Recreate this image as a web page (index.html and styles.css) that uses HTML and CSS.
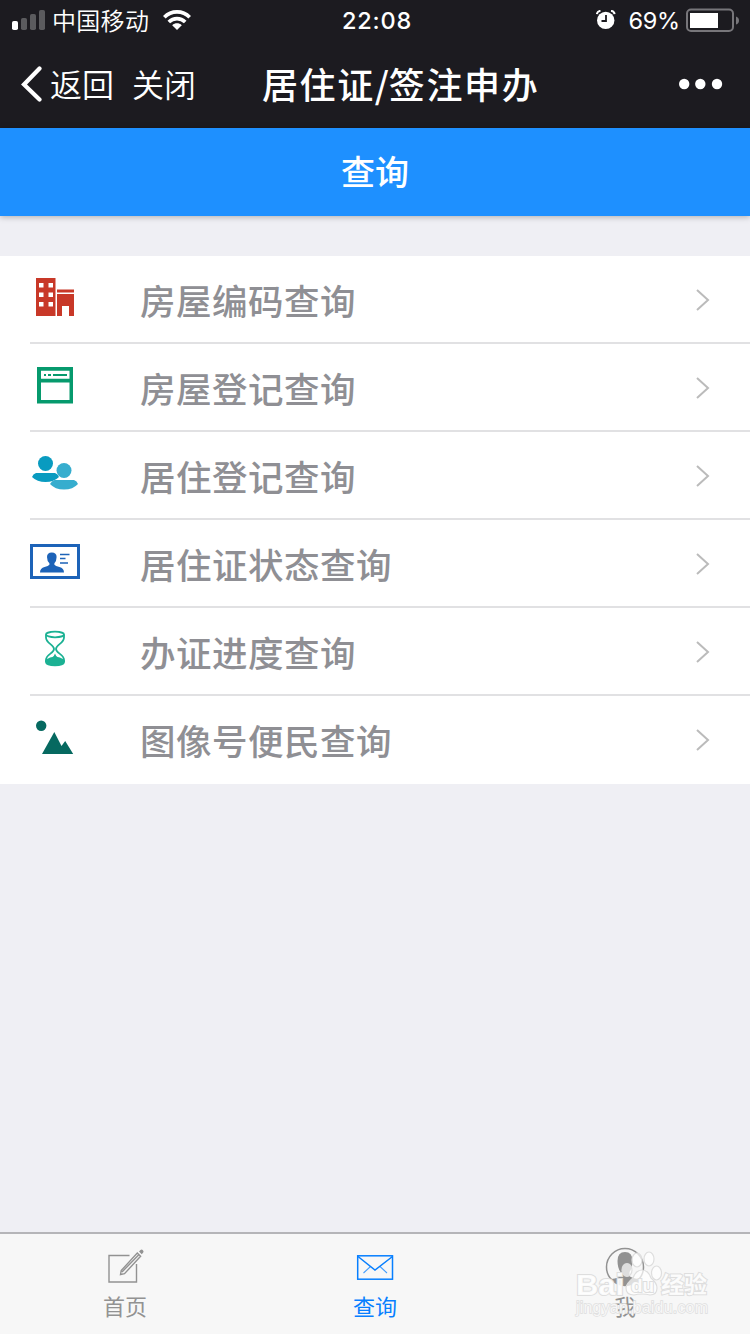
FILE: index.html
```html
<!DOCTYPE html>
<html lang="zh-CN">
<head>
<meta charset="utf-8">
<title>居住证/签注申办</title>
<link rel="stylesheet" href="styles.css">
</head>
<body>
<div class="app">
  <header class="top">
    <div class="status">
      <div class="status-left">
        <svg class="signal" width="34" height="20" viewBox="0 0 34 20"><g fill="#fff"><rect x="0" y="11" width="6" height="9" rx="1.8"/><g opacity=".28"><rect x="9" y="8" width="6" height="12" rx="1.8"/><rect x="18" y="4" width="6" height="16" rx="1.8"/><rect x="27" y="0" width="6" height="20" rx="1.8"/></g></g></svg>
        <span class="carrier">中国移动</span>
        <svg class="wifi" width="28" height="20" viewBox="0 0 28 20"><g fill="none" stroke="#fff" stroke-width="3.7"><path d="M1.3 7.2C8.3.1 19.7.1 26.7 7.2"/><path d="M5.8 12c4.6-4.500 11.800-4.500 16.400 0"/></g><path fill="#fff" d="M9.200 15.200c2.800-2.500 6.800-2.500 9.600 0L14 20z"/></svg>
      </div>
      <span class="time">22:08</span>
      <div class="status-right">
        <svg width="20" height="20" viewBox="0 0 20 20"><circle cx="9.700" cy="10.400" r="8.700" fill="#fff"/><path d="M.8 4.200Q1.200 1.200 4.500.8M15 .8q3.200.4 3.600 3.400" stroke="#fff" stroke-width="2" fill="none"/><path d="M10 5v6H5.500" fill="none" stroke="#1c1b20" stroke-width="1.800"/></svg>
        <span class="percent">69%</span>
        <svg class="battery" width="54" height="24" viewBox="0 0 54 24"><rect x="1" y="1.500" width="46" height="21.500" rx="4" fill="none" stroke="#77767a" stroke-width="2"/><rect x="4" y="5" width="28" height="15" fill="#fff"/><path d="M50 8.500q3 1 3 4t-3 4z" fill="#77767a"/></svg>
      </div>
    </div>
    <nav class="nav">
      <div class="nav-left">
        <svg width="22" height="38" viewBox="0 0 22 38"><path d="M19.500 3.500 4 19.500l15.500 15" fill="none" stroke="#fff" stroke-width="4.200" stroke-linecap="round"/></svg>
        <span class="back">返回</span><span class="close">关闭</span>
      </div>
      <h1 class="title">居住证<span class="slash">/</span>签注申办</h1>
      <svg class="more" width="44" height="12" viewBox="0 0 44 12" fill="#fff"><circle cx="5.200" cy="6" r="5.200"/><circle cx="21.300" cy="6" r="5.200"/><circle cx="38" cy="6" r="5.200"/></svg>
    </nav>
  </header>
  <div class="banner">查询</div>
  <main class="content">
    <ul class="list">
      <li class="row"><svg class="icon" width="50" height="50" viewBox="0 0 50 50"><path fill="#c83828" fill-rule="evenodd" d="M6 4h19.500v38H6zM9 9h4.500v4.500H9zm9.500 0H23v4.500h-4.500zM9 18.500h4.500V23H9zm9.500 0H23V23h-4.500zM9 28h4.500v4.500H9zm9.500 0H23v4.500h-4.500zM27 15.500h17v3H27zM27 20h17v22h-5V32h-7v10h-5z"/></svg><div class="cell"><span>房屋编码查询</span><svg class="arrow" width="15" height="24" viewBox="0 0 15 24"><path d="m2 2 11 10L2 22"/></svg></div></li>
      <li class="row"><svg class="icon" width="50" height="50" viewBox="0 0 50 50"><path fill="#069a6d" fill-rule="evenodd" d="M7 5h36v36.500H7zM11 8.700v8h28.500v-8zM11 20.500V38h28.500V20.500z"/><path d="M14 13h2m2 0h3m2 0h14" stroke="#069a6d" stroke-width="2"/></svg><div class="cell"><span>房屋登记查询</span><svg class="arrow" width="15" height="24" viewBox="0 0 15 24"><path d="m2 2 11 10L2 22"/></svg></div></li>
      <li class="row"><svg class="icon" width="50" height="50" viewBox="0 0 50 50"><g fill="#099bc0"><ellipse cx="15.500" cy="13.500" rx="7.500" ry="7.500"/><path d="M6 23h19q3 1 4 4-5 5-13.500 5T2 27q1-3 4-4z"/></g><g fill="#36adce"><ellipse cx="34" cy="20.500" rx="7.500" ry="7.500"/><path d="M24.500 30H44q3 1 4 4-5 5.500-14 5.500T20 34q1.500-3 4.500-4z"/></g></svg><div class="cell"><span>居住登记查询</span><svg class="arrow" width="15" height="24" viewBox="0 0 15 24"><path d="m2 2 11 10L2 22"/></svg></div></li>
      <li class="row"><svg class="icon" width="50" height="50" viewBox="0 0 50 50"><rect x="1.500" y="7.500" width="47" height="32" fill="none" stroke="#1d63b8" stroke-width="3"/><path fill="#1d63b8" d="M17 19q0-4.500 4.800-4.500t4.800 4.500q0 4-2.200 6.200v1.600q1 1.200 5 2.200 4.600 1.100 4.600 5.500H10q0-4.400 4.600-5.500 3.800-1 4.800-2.200v-1.600Q17 23 17 19z"/><path d="M30 16.500h9.500M30 20.500h5.500M30 25h8" stroke="#1d63b8" stroke-width="1.700"/></svg><div class="cell"><span>居住证状态查询</span><svg class="arrow" width="15" height="24" viewBox="0 0 15 24"><path d="m2 2 11 10L2 22"/></svg></div></li>
      <li class="row"><svg class="icon" width="50" height="50" viewBox="0 0 50 50"><g fill="none" stroke="#1bb193" stroke-width="1.800"><ellipse cx="25" cy="8.500" rx="9" ry="2.800"/><path d="M16 8.500v3c0 6 8 7 8 11.500s-8 5-8 11v2M34 8.500v3c0 6-8 7-8 11.500s8 5 8 11v2"/></g><path fill="#1bb193" d="M15.200 34.500q2-2.500 7.300-3.500 1.600-.8 2.500-3.500.9 2.700 2.500 3.500 5.300 1 7.300 3.500v2.300Q34 40.200 25 40.200t-9.800-3.400z"/></svg><div class="cell"><span>办证进度查询</span><svg class="arrow" width="15" height="24" viewBox="0 0 15 24"><path d="m2 2 11 10L2 22"/></svg></div></li>
      <li class="row"><svg class="icon" width="50" height="50" viewBox="0 0 50 50" fill="#066960"><circle cx="11.200" cy="11.800" r="5.200"/><path d="m12 40 12.300-22 7.200 14 3.700-5 8 13z"/></svg><div class="cell"><span>图像号便民查询</span><svg class="arrow" width="15" height="24" viewBox="0 0 15 24"><path d="m2 2 11 10L2 22"/></svg></div></li>
    </ul>
  </main>
  <footer class="tabs">
    <div class="tab"><svg width="40" height="40" viewBox="0 0 40 40"><g fill="none" stroke="#929292" stroke-width="1.400"><path d="M24.500 8.500H4v26.500h27.500V17"/><path d="m15.500 27.500.7-4L32.300 6.100l3.300 3.200L19.500 26.700zM17 25 33.800 7.700"/></g><path d="m34 4.500 1.500-1.500q1.200-1 2.400.2 1.300 1.300.2 2.500L36.700 7.300z" fill="#929292"/></svg><span>首页</span></div>
    <div class="tab active"><svg width="40" height="40" viewBox="0 0 40 40" fill="none" stroke="#077fff" stroke-width="1.500"><rect x="2.700" y="8.800" width="34.800" height="23.400"/><path d="m3 9.500 17 13.500 17.500-13.500"/><path d="m15.500 19.500-7 6.500M25 19.500l7 6.500" stroke-width="1.100" opacity=".75"/></svg><span>查询</span></div>
    <div class="tab"><svg width="40" height="40" viewBox="0 0 40 40"><circle cx="20" cy="20" r="18.500" fill="none" stroke="#929292" stroke-width="1.500"/><path fill="#929292" d="M12.500 14q0-9 7.500-9t7.500 9q0 7-3 11v4q2 2 9 3-5 6.500-13.500 6.500T6.500 32q7-1 9-3v-4q-3-4-3-11z"/></svg><span>我</span></div>
    <div class="watermark">
      <svg width="150" height="76" viewBox="0 0 150 76">
        <g fill="#fff" fill-opacity=".7" stroke="#dedede" stroke-width="1.200">
          <ellipse cx="75" cy="18" rx="5" ry="7"/><ellipse cx="87" cy="17" rx="5" ry="7"/><ellipse cx="65" cy="28" rx="5" ry="6.500"/><ellipse cx="94.500" cy="31" rx="5" ry="7"/>
          <path d="M80 28q6 0 9 8 6 5 6 10 0 7-7 7-8-2-16 0-8 0-8-7 0-4 7-10 3-8 9-8z"/>
          <g paint-order="stroke" stroke-width="2" fill-opacity=".9">
          <text class="wm-logo" x="14" y="53" textLength="48" lengthAdjust="spacingAndGlyphs">Bai</text>
          <text class="wm-du" x="69" y="50">du</text>
          <text class="wm-cn" x="99" y="51">经验</text>
          <text class="wm-url" x="14" y="71" textLength="132" stroke-width="1.400" fill-opacity=".75">jingyan.baidu.com</text>
          </g>
        </g>
      </svg>
    </div>
  </footer>
</div>
</body>
</html>
```
FILE: styles.css
```css
* { box-sizing: border-box; }
body { margin: 0; font-family: "Noto Sans CJK SC", sans-serif; background: #efeff4; }
svg { display: block; flex: none; }
.app { width: 750px; height: 1334px; display: flex; flex-direction: column; overflow: hidden; }

.top { height: 128px; flex: none; background: #1c1b20; color: #fff; }
.status { height: 40px; display: grid; grid-template-columns: 1fr auto 1fr; align-items: center; padding: 0 10px 0 12px; }
.status-left, .status-right { display: flex; align-items: center; }
.carrier { margin-left: 6px; font-size: 24px; font-weight: 350; line-height: 40px; letter-spacing: 0.3px; }
.wifi { margin-left: 14px; }
.time { padding: 2px 0 0 2px; font: 500 23.5px/38px Inter, sans-serif; letter-spacing: 0.8px; }
.status-right { justify-content: flex-end; }
.percent { margin: 0 6px 0 12px; padding-top: 2px; font: 23.5px/38px Inter, sans-serif; letter-spacing: -0.2px; }

.nav { height: 88px; display: flex; align-items: center; padding: 0 27px 0 20px; }
.nav-left { width: 242px; flex: none; display: flex; align-items: center; font-size: 32px; font-weight: 350; line-height: 86px; }
.nav-left span { padding-bottom: 2px; }
.back { margin-left: 8px; }
.close { margin-left: 18px; }
.title { margin: 0; padding-bottom: 1px; font-size: 36px; font-weight: 500; line-height: 85px; letter-spacing: 1.6px; white-space: nowrap; }
.slash { letter-spacing: 0; }
.more { margin-left: auto; }

.banner { height: 88px; flex: none; background: #1e90ff; color: #fff; text-align: center; font-size: 34px; font-weight: 500; line-height: 86px; box-shadow: 0 1px 6px rgba(0, 0, 0, 0.28); }

.content { flex: 1; padding-top: 40px; }
.list { margin: 0; padding: 0; list-style: none; background: #fff; }
.row { height: 88px; display: flex; padding-left: 30px; background: linear-gradient(#e1e1e3, #e1e1e3) 30px 100% / 100% 2px no-repeat; }
.row:last-child { background: none; }
.icon { margin-top: 18px; }
.cell { flex: 1; display: flex; justify-content: space-between; align-items: center; padding: 0 40px 0 60px; color: #8f8f94; font-size: 35.5px; font-weight: 500; line-height: 88px; letter-spacing: 0.5px; }
.arrow { fill: none; stroke: #bbb; stroke-width: 2; }

.tabs { position: relative; height: 102px; flex: none; display: flex; background: #f7f7f7; border-top: 2px solid #b5b5b8; }
.tab { flex: 1; display: flex; flex-direction: column; align-items: center; padding-top: 13px; color: #929292; font-size: 22px; line-height: 37px; }
.active { color: #077fff; }
.watermark { position: absolute; right: 38px; bottom: 16px; }
.wm-logo { font: 700 29px "Liberation Sans", sans-serif; }
.wm-du { font: 700 19px "Liberation Sans", sans-serif; }
.wm-cn { font: 700 23px "Noto Sans CJK SC", sans-serif; }
.wm-url { font: 16px "Liberation Sans", sans-serif; }
```
